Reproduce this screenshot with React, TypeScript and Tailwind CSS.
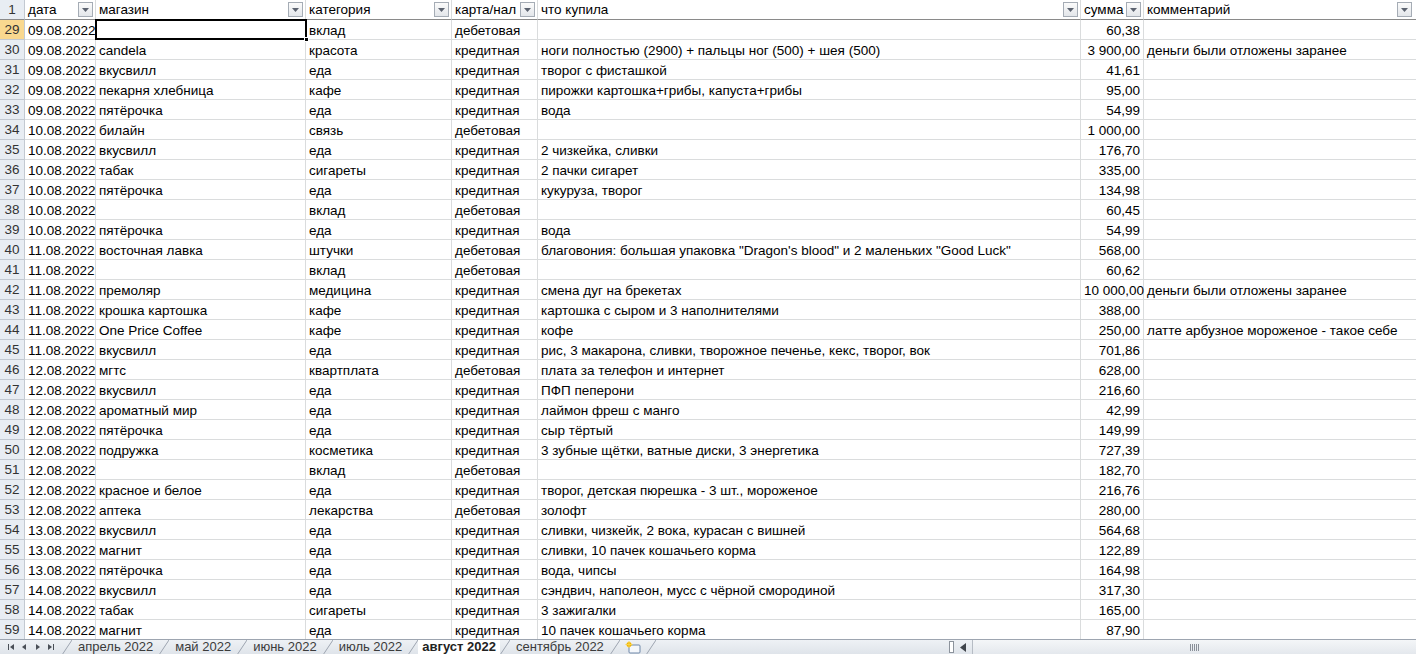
import React from 'react';

type Row = [number, string, string, string, string, string, string, string];

const rows: Row[] = [
  [29, '09.08.2022', '', 'вклад', 'дебетовая', '', '60,38', ''],
  [30, '09.08.2022', 'candela', 'красота', 'кредитная', 'ноги полностью (2900) + пальцы ног (500) + шея (500)', '3 900,00', 'деньги были отложены заранее'],
  [31, '09.08.2022', 'вкусвилл', 'еда', 'кредитная', 'творог с фисташкой', '41,61', ''],
  [32, '09.08.2022', 'пекарня хлебница', 'кафе', 'кредитная', 'пирожки картошка+грибы, капуста+грибы', '95,00', ''],
  [33, '09.08.2022', 'пятёрочка', 'еда', 'кредитная', 'вода', '54,99', ''],
  [34, '10.08.2022', 'билайн', 'связь', 'дебетовая', '', '1 000,00', ''],
  [35, '10.08.2022', 'вкусвилл', 'еда', 'кредитная', '2 чизкейка, сливки', '176,70', ''],
  [36, '10.08.2022', 'табак', 'сигареты', 'кредитная', '2 пачки сигарет', '335,00', ''],
  [37, '10.08.2022', 'пятёрочка', 'еда', 'кредитная', 'кукуруза, творог', '134,98', ''],
  [38, '10.08.2022', '', 'вклад', 'дебетовая', '', '60,45', ''],
  [39, '10.08.2022', 'пятёрочка', 'еда', 'кредитная', 'вода', '54,99', ''],
  [40, '11.08.2022', 'восточная лавка', 'штучки', 'дебетовая', 'благовония: большая упаковка "Dragon\'s blood" и 2 маленьких "Good Luck"', '568,00', ''],
  [41, '11.08.2022', '', 'вклад', 'дебетовая', '', '60,62', ''],
  [42, '11.08.2022', 'премоляр', 'медицина', 'кредитная', 'смена дуг на брекетах', '10 000,00', 'деньги были отложены заранее'],
  [43, '11.08.2022', 'крошка картошка', 'кафе', 'кредитная', 'картошка с сыром и 3 наполнителями', '388,00', ''],
  [44, '11.08.2022', 'One Price Coffee', 'кафе', 'кредитная', 'кофе', '250,00', 'латте арбузное мороженое - такое себе'],
  [45, '11.08.2022', 'вкусвилл', 'еда', 'кредитная', 'рис, 3 макарона, сливки, творожное печенье, кекс, творог, вок', '701,86', ''],
  [46, '12.08.2022', 'мгтс', 'квартплата', 'дебетовая', 'плата за телефон и интернет', '628,00', ''],
  [47, '12.08.2022', 'вкусвилл', 'еда', 'кредитная', 'ПФП пеперони', '216,60', ''],
  [48, '12.08.2022', 'ароматный мир', 'еда', 'кредитная', 'лаймон фреш с манго', '42,99', ''],
  [49, '12.08.2022', 'пятёрочка', 'еда', 'кредитная', 'сыр тёртый', '149,99', ''],
  [50, '12.08.2022', 'подружка', 'косметика', 'кредитная', '3 зубные щётки, ватные диски, 3 энергетика', '727,39', ''],
  [51, '12.08.2022', '', 'вклад', 'дебетовая', '', '182,70', ''],
  [52, '12.08.2022', 'красное и белое', 'еда', 'кредитная', 'творог, детская пюрешка - 3 шт., мороженое', '216,76', ''],
  [53, '12.08.2022', 'аптека', 'лекарства', 'дебетовая', 'золофт', '280,00', ''],
  [54, '13.08.2022', 'вкусвилл', 'еда', 'кредитная', 'сливки, чизкейк, 2 вока, курасан с вишней', '564,68', ''],
  [55, '13.08.2022', 'магнит', 'еда', 'кредитная', 'сливки, 10 пачек кошачьего корма', '122,89', ''],
  [56, '13.08.2022', 'пятёрочка', 'еда', 'кредитная', 'вода, чипсы', '164,98', ''],
  [57, '14.08.2022', 'вкусвилл', 'еда', 'кредитная', 'сэндвич, наполеон, мусс с чёрной смородиной', '317,30', ''],
  [58, '14.08.2022', 'табак', 'сигареты', 'кредитная', '3 зажигалки', '165,00', ''],
  [59, '14.08.2022', 'магнит', 'еда', 'кредитная', '10 пачек кошачьего корма', '87,90', ''],
];

const cols = 'grid grid-cols-[25px_71px_210px_146px_86px_543px_63px_1fr]';
const cell = 'h-[20px] border-r border-b border-[#dadcdd] px-[3px] pt-[2px] leading-[17px] whitespace-nowrap overflow-visible';

function FilterBtn() {
  return (
    <span className="ml-auto flex h-[15px] w-[15px] shrink-0 items-center justify-center border border-[#a5acb5] bg-gradient-to-b from-[#fbfbfb] to-[#e3e6ea]">
      <svg width="7" height="4" viewBox="0 0 7 4">
        <path d="M0 0h7L3.5 4z" fill="#5c6370" />
      </svg>
    </span>
  );
}

function HeadCell({ label }: { label: string }) {
  return (
    <div className="flex h-[20px] items-center border-r border-b border-b-[#8a8a8a] border-r-[#dadcdd] pl-[3px] pr-[2px]">
      <span className="whitespace-nowrap pt-[2px]">{label}</span>
      <FilterBtn />
    </div>
  );
}

function Slash() {
  return (
    <svg width="10" height="15" viewBox="0 0 10 15" className="shrink-0">
      <path d="M0 15L10 0" stroke="#9da5b0" strokeWidth="1" />
    </svg>
  );
}

function TabBar() {
  const tabs = ['апрель 2022', 'май 2022', 'июнь 2022', 'июль 2022', 'август 2022', 'сентябрь 2022'];
  return (
    <div className="flex h-[15px] items-stretch border-t border-[#9da5b0] bg-gradient-to-b from-[#eef1f5] to-[#dfe4ea] text-[13px] leading-[14px] text-[#3b3b3b]">
      <div className="flex w-[62px] shrink-0 items-center justify-around px-[4px] text-[#4a4f57]">
        <svg width="8" height="8" viewBox="0 0 8 8"><path d="M1 1h1v6H1zM7 1v6L3 4z" fill="currentColor" /></svg>
        <svg width="8" height="8" viewBox="0 0 8 8"><path d="M6 1v6L2 4z" fill="currentColor" /></svg>
        <svg width="8" height="8" viewBox="0 0 8 8"><path d="M2 1v6l4-3z" fill="currentColor" /></svg>
        <svg width="8" height="8" viewBox="0 0 8 8"><path d="M1 1v6l4-3zM6 1h1v6H6z" fill="currentColor" /></svg>
      </div>
      <div className="flex items-stretch">
        {tabs.map((t) => {
          const active = t === 'август 2022';
          return (
            <div key={t} className="flex items-stretch">
              <Slash />
              <div
                className={
                  active
                    ? 'flex items-center bg-white px-[4px] font-bold text-[#222]'
                    : 'flex items-center px-[6px]'
                }
              >
                {t}
              </div>
            </div>
          );
        })}
        <Slash />
        <div className="flex items-center px-[5px]">
          <svg width="16" height="13" viewBox="0 0 16 13">
            <rect x="4" y="4" width="11" height="8" rx="1" fill="#f4f7fb" stroke="#6f87a8" />
            <circle cx="4" cy="3.5" r="2.5" fill="#f4b400" />
            <path d="M4 0v7M0.5 3.5h7" stroke="#f7d44a" strokeWidth="1" />
          </svg>
        </div>
        <Slash />
      </div>
      <div className="flex-1" />
      <div className="flex w-[467px] shrink-0 items-stretch">
        <div className="my-[1px] w-[5px] border border-[#8c939c] bg-white" />
        <div className="flex w-[18px] items-center justify-center">
          <svg width="6" height="9" viewBox="0 0 6 9"><path d="M6 0v9L0 4.5z" fill="#3f444b" /></svg>
        </div>
        <div className="flex flex-1 items-center justify-center border-l border-[#b6bcc4] bg-gradient-to-b from-[#f4f6f8] to-[#e4e8ed]">
          <svg width="9" height="7" viewBox="0 0 9 7">
            <path d="M0.5 0v7M2.5 0v7M4.5 0v7M6.5 0v7M8.5 0v7" stroke="#8a9099" strokeWidth="1" />
          </svg>
        </div>
      </div>
    </div>
  );
}

export default function App() {
  return (
    <div className="flex h-[654px] w-[1416px] flex-col overflow-hidden bg-white font-['Liberation_Sans',Arial,sans-serif] text-[13.5px] text-black">
      <div className="flex-1 overflow-hidden">
        {/* header row */}
        <div className={cols}>
          <div className="flex h-[20px] items-center justify-center border-r border-b border-r-[#c3c9d1] border-b-[#8a8a8a] bg-[#e8edf3] pt-[2px] text-[#333]">1</div>
          <HeadCell label="дата" />
          <HeadCell label="магазин" />
          <HeadCell label="категория" />
          <HeadCell label="карта/нал" />
          <HeadCell label="что купила" />
          <HeadCell label="сумма" />
          <div className="flex h-[20px] items-center border-b border-[#8a8a8a] pl-[3px] pr-[4px]">
            <span className="pt-[2px]">комментарий</span>
            <FilterBtn />
          </div>
        </div>

        {rows.map((r) => {
          const sel = r[0] === 29;
          return (
            <div key={r[0]} className={cols}>
              <div
                className={
                  sel
                    ? 'flex h-[20px] items-center justify-center border-r border-b border-r-[#c3c9d1] border-b-[#c3c9d1] bg-[#f9d88f] pt-[2px] text-[#333]'
                    : 'flex h-[20px] items-center justify-center border-r border-b border-[#c3c9d1] bg-[#e8edf3] pt-[2px] text-[#333]'
                }
              >
                {r[0]}
              </div>
              <div className={cell}>{r[1]}</div>
              {sel ? (
                <div className="relative h-[20px] border-b border-[#dadcdd]">
                  <div className="absolute -left-[1px] -top-[1px] h-[21px] w-[212px] border-2 border-black" />
                  <div className="absolute -bottom-[3px] -right-[3px] h-[5px] w-[5px] border border-white bg-black" />
                </div>
              ) : (
                <div className={cell}>{r[2]}</div>
              )}
              <div className={cell}>{r[3]}</div>
              <div className={cell}>{r[4]}</div>
              <div className={cell}>{r[5]}</div>
              <div className={cell + ' text-right'}>{r[6]}</div>
              <div className="h-[20px] border-b border-[#dadcdd] px-[3px] pt-[2px] leading-[17px] whitespace-nowrap">{r[7]}</div>
            </div>
          );
        })}
      </div>
      <TabBar />
    </div>
  );
}
